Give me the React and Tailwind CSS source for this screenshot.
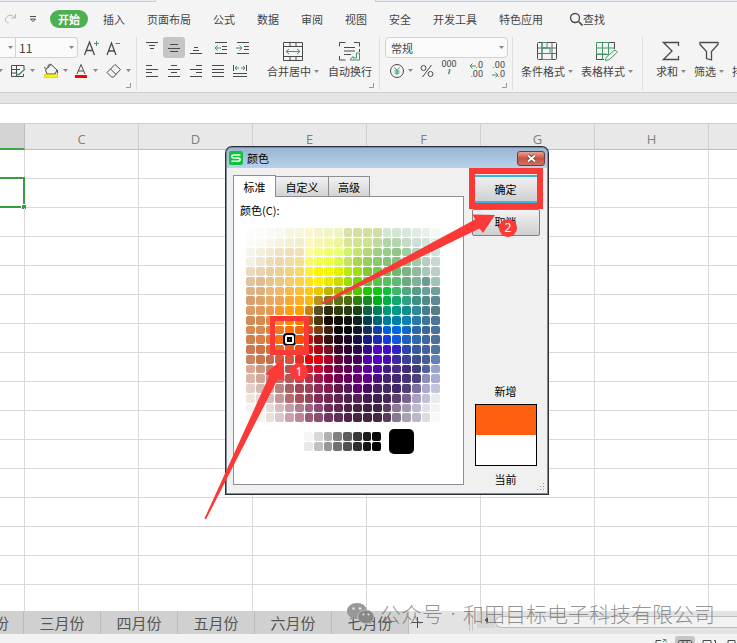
import { useState } from 'react';

const menuTabs = ['插入', '页面布局', '公式', '数据', '审阅', '视图', '安全', '开发工具', '特色应用'];

const columns = ['C', 'D', 'E', 'F', 'G', 'H', 'I'];
const rows = Array.from({ length: 16 }, (_, i) => i);

const sheets = ['三月份', '四月份', '五月份', '六月份', '七月份'];

// 20 x 20 standard colors, one string per row
const palette = [
  'fcfdfd fafcfb f8faf6 f8f9f2 f6f5dd f6f6d8 fbf6d0 f5f4d0 f2f3c6 f0f3c4 d8e2a8 d4dfa2 d3dfa0 cfdea2 d5e6d0 d3e4d3 d8e7d9 e0ebe3 e8f1ec f3f8f5',
  'fbfcfa fafbf6 f7f6ec f5f3e0 f3efd6 f2edcf fcf6c0 f5f5b8 f2f6a8 edf59c d8e694 d3e394 cfe090 c0d99c b0d3a8 b4d4b0 c4dcc6 cfe0d6 d4e5dc e0ede6',
  'f5f4ea f3f0e0 f3ead0 f0e4c0 f0e0b8 f0e2b4 fbfb98 f5ff80 f0ff70 e8ff78 d0f468 c6e56c b4d878 a0d080 98cc88 90c68c a4cca4 b8d4c0 c0d8cc d0e2da',
  'f2f1e4 eee6d2 ecdcb8 eed6a8 f0dca4 f2e08a f8fa68 f0ff58 ecff40 dcf850 c4e460 a8d848 98d058 88cc68 84c478 88c080 8cc090 a4c8a8 b4cfc0 c4dacf',
  'ead9bc e8d2b0 e8cfa0 ecd090 f2d478 f6dc60 fff040 fff400 f4f800 e0f400 b8ec10 a0e010 80cc30 78c850 70bf60 70b870 7cb484 90baa0 a8c8bc b8d0c8',
  'e0c4a0 dfbd94 e6c48c ecc87c f4cc64 fad448 ffe020 fff000 e8e800 ccdc00 98e000 70d800 60c838 58c450 58c060 60b878 68ac80 80b098 6c9c94 a0c4bc',
  'dcb288 deb080 e8b878 f0b866 f4b850 f8c038 ffc818 e8c800 c0b400 b0b800 80b400 58c400 20c808 10c810 10c040 40b868 50a880 589c88 68a09c 70a09c',
  'd8a070 dca468 e8a860 f0a450 f8a830 ffac20 f8b810 b89020 807020 607018 506c10 2c8010 188c20 00b018 00b040 10a870 30a080 409088 508c8c 608890',
  'dc9c68 e09a60 e89850 f89830 ffa010 ffa000 c88010 584c28 2c2c10 303c10 283c10 1c4018 106048 008058 009870 009880 108c8c 308898 487c8c 587c88',
  'd08c58 d88a50 e88840 f88820 ff8800 f07c00 a05c10 50340c 180c08 101008 101410 10201c 083c48 006478 007c98 0080a8 1080b0 2878a8 40749c 507498',
  'd88a56 d88a50 e08040 f07820 ff7000 f86400 c04810 7c3c14 402010 100808 080810 101828 143058 1040a8 0060d8 0068e0 1068c0 2868a8 386898 487098',
  'd08050 d88048 e07838 f87018 ff6000 f85008 c01010 781410 381010 200818 200828 181040 181c80 2028b8 1838e0 1058e0 2060c0 3068b0 3c68a0 4c7098',
  'cc7850 d07448 d86c40 e86828 f05818 f04810 d81010 a80818 781020 400828 300030 280c48 300c88 5008c8 4010c8 3020c8 2848b0 3858a0 4460a0 5074a0',
  'cc8460 c87850 c46c50 cc6040 d85038 e03020 e80008 dc0010 a80028 680038 500048 480060 5000a8 5400c0 480cb0 3c28a0 3c4098 3c4c90 445c98 6880b8',
  'dca898 d09880 c87c68 c06858 c05048 c83838 d81828 c80830 900038 700048 600058 600078 5c0098 5008a0 401c88 482c80 402c78 403c78 5060a0 98a4c8',
  'dcb8a8 d4a898 c88c80 bc7068 b45858 b44850 b83048 a01848 900048 700050 680060 680070 640088 481078 482470 442870 443478 4c4080 8c8cb8 a8acd0',
  'e4d0c8 d8bcb4 cca8a0 b88480 a86060 a04858 984058 8c2c54 801c50 601848 581858 600070 480c60 482060 442860 402868 504078 7c70a0 acaacc c0c4dc',
  'eee4e0 e8d8d4 d8bcbc c49898 b46c6c a85058 944458 802c58 702850 602450 502050 582058 441c50 402050 442858 5c4070 786090 a8a0c0 c4c0d4 e8ecee',
  'f4f5f3 f2f0ee e4dcd8 d8bcc0 c49ca4 b08090 a06080 8c4870 702c58 602850 4c2048 482040 402040 442444 5c4060 8c7898 a498b0 c0b8cc e0e0e8 f2f3f5',
  'fafaf9 f3f5f2 e8e0dc dcc8cc cca0ac bc8494 9c5878 885070 703860 603058 502448 4c2448 442440 482848 583c58 887890 a8a0b4 bcb8c8 dcdce0 f8f9f8',
].flatMap((row) => row.split(' '));

const grays = (
  'f5f5f5 d8d8d8 b0b0b0 808080 5c5c5c 383838 1c1c1c 080808 ' +
  'e8e8e8 c0c0c0 989898 707070 505050 303030 141414 000000'
).split(' ');

// row 11, column 4
const SELECTED = 11 * 20 + 4;

function Icon({ size = 16, width, className = '', children }) {
  return (
    <svg
      width={width || size}
      height={size}
      viewBox={`0 0 ${width || size} ${size}`}
      fill="none"
      stroke="#4a4a4a"
      className={`shrink-0 ${className}`}
      aria-hidden="true"
    >
      {children}
    </svg>
  );
}

function Caret({ className = '' }) {
  return (
    <svg width="5" height="3" viewBox="0 0 5 3" className={`shrink-0 ${className}`} aria-hidden="true">
      <path d="M0 0h5L2.5 3z" fill="#888" />
    </svg>
  );
}

function IconButton({ label, active, className = 'w-[22px]', children }) {
  return (
    <button
      type="button"
      aria-label={label}
      className={`flex h-[21px] shrink-0 items-center justify-center gap-1 rounded-[3px] ${active ? 'bg-[#c5c5c5]' : ''} ${className}`}
    >
      {children}
    </button>
  );
}

function BigButton({ label, caret, children }) {
  return (
    <button type="button" className="flex shrink-0 flex-col items-center pt-1 leading-4">
      {children}
      <span className="mt-[2px] flex items-center gap-[3px] whitespace-nowrap">
        {label}
        {caret ? <Caret /> : null}
      </span>
    </button>
  );
}

function Corner() {
  return (
    <svg width="5" height="5" viewBox="0 0 5 5" className="absolute right-[5px] bottom-[2px]" aria-hidden="true">
      <path d="M4.5 0v4.5H0" fill="none" stroke="#999" />
    </svg>
  );
}

function Lines({ d, arrow }) {
  return (
    <Icon size={14}>
      <path d={d} />
      {arrow ? <path d={arrow} stroke="#43966a" /> : null}
    </Icon>
  );
}

function MenuBar() {
  return (
    <nav className="flex h-8 items-center overflow-hidden pt-[2px] whitespace-nowrap">
      <button type="button" aria-label="恢复" className="ml-1 shrink-0">
        <Icon size={12} width={13}>
          <path d="M11.5 1v4H7.5M11 5C9 2 5.5 1.5 3 3.5S1 9 4.5 10" stroke="#b5b5b5" />
        </Icon>
      </button>
      <button type="button" aria-label="自定义快速访问工具栏" className="ml-3 shrink-0">
        <Icon size={8}>
          <path d="M1 1.500h6M1.500 4h5L4 6.500z" />
        </Icon>
      </button>
      <button type="button" className="ml-[13px] h-[18px] shrink-0 rounded-full bg-[#4caf50] px-2 leading-[18px] font-bold text-white">
        开始
      </button>
      <div className="ml-[15px] flex shrink-0 gap-[22px]">
        {menuTabs.map((tab) => (
          <button key={tab} type="button">{tab}</button>
        ))}
      </div>
      <button type="button" className="ml-[26px] flex shrink-0 items-center">
        <Icon size={14}>
          <circle cx="6" cy="6" r="4.5" strokeWidth="1.3" />
          <path d="M9.5 9.500l4 4" strokeWidth="1.6" />
        </Icon>
        查找
      </button>
    </nav>
  );
}

function FontGroup() {
  return (
    <div className="relative w-[137px] shrink-0 border-r border-[#dedede]">
      <div className="flex h-[21px] items-center">
        <div className="relative h-[21px] w-4 border-y border-r border-[#d2d2d2] bg-[#fafafa]">
          <Caret className="absolute top-2 left-2" />
        </div>
        <div className="relative">
          <select aria-label="字号" className="h-[21px] w-[62px] appearance-none rounded-r-[4px] border-y border-r border-[#d2d2d2] bg-[#fafafa] pl-[3px] text-xs leading-4">
            <option>11</option>
          </select>
          <Caret className="pointer-events-none absolute top-[9px] right-1" />
        </div>
        <IconButton label="增大字号" className="ml-[2px] w-[22px]">
          <Icon size={16}>
            <path d="M1.500 15L6.500 2l5 13M3.200 10.500h6.600" strokeWidth="1.3" />
            <path d="M11 3.500h5M13.500 1v5" stroke="#43966a" />
          </Icon>
        </IconButton>
        <IconButton label="减小字号">
          <Icon size={16}>
            <path d="M2 15L6.500 3l4.500 12M3.700 11h5.600" strokeWidth="1.3" />
            <path d="M10.500 3.500H15" stroke="#43966a" />
          </Icon>
        </IconButton>
      </div>
      <div className="mt-[2px] flex h-[21px] items-center">
        <Caret className="-ml-[2px]" />
        <IconButton label="边框" className="ml-[6px] w-[26px]">
          <Icon size={14} width={16}>
            <path d="M14 5V1.500H1.500v11H13.500V10M1.500 5.500H10M1.500 9H6M6.500 1.500v11" />
            <path d="M15 5L9 10.500H6" stroke="#43966a" strokeWidth="1.5" />
          </Icon>
          <Caret />
        </IconButton>
        <IconButton label="填充颜色" className="ml-[7px] w-[26px]">
          <Icon size={16}>
            <path d="M8 1.500L2.500 7 4 11h8l2-4zM3.500 5.500L1 4.500M5 5V2.500L8 1M14.500 7v3.500" />
            <path d="M1.500 11.500h13v3h-13z" fill="#fff200" stroke="#bdb400" strokeWidth=".5" />
          </Icon>
          <Caret />
        </IconButton>
        <IconButton label="字体颜色" className="ml-1 w-[26px]">
          <Icon size={16}>
            <path d="M4 11L8 1.500 12 11M5.500 8h5" />
            <path d="M2 12h12v3H2z" fill="#f00" stroke="none" />
          </Icon>
          <Caret />
        </IconButton>
        <IconButton label="清除" className="ml-[7px] w-[26px]">
          <Icon size={16}>
            <path d="M9 1.500l5.500 5-7 7.500h-2L1 9.500zM4.500 6l5.500 5.500" />
          </Icon>
          <Caret />
        </IconButton>
      </div>
      <Corner />
    </div>
  );
}

function AlignGroup() {
  return (
    <div className="relative flex w-[243px] shrink-0 border-r border-[#dedede] pl-1">
      <div className="w-[116px]">
        <div className="flex">
          <IconButton label="顶端对齐"><Lines d="M1 1.500h12M4 4.500h6M5 7.500h4" /></IconButton>
          <IconButton label="垂直居中" active><Lines d="M3 3.500h8M1 7.500h12M3 10.500h8" /></IconButton>
          <IconButton label="底端对齐"><Lines d="M5 6.500h4M4 9.500h6M1 12.500h12" /></IconButton>
          <IconButton label="减少缩进量" className="ml-[3px] w-[22px]">
            <Lines d="M1 1.500h12M8 5.500h5M8 8.500h5M1 12.500h12" arrow="M1 7h6M3.5 4.500L1 7l2.500 2.500" />
          </IconButton>
          <IconButton label="增加缩进量">
            <Lines d="M1 1.500h12M8 5.500h5M8 8.500h5M1 12.500h12" arrow="M0 7h6M3.500 4.500L6 7 3.500 9.500" />
          </IconButton>
        </div>
        <div className="mt-[2px] flex">
          <IconButton label="左对齐"><Lines d="M1 1.500h6M1 5.500h12M1 8.500h6M1 12.500h12" /></IconButton>
          <IconButton label="水平居中"><Lines d="M4 1.500h6M1 5.500h12M4 8.500h6M1 12.500h12" /></IconButton>
          <IconButton label="右对齐"><Lines d="M7 1.500h6M1 5.500h12M7 8.500h6M1 12.500h12" /></IconButton>
          <IconButton label="两端对齐"><Lines d="M1 1.500h12M1 5.500h12M1 8.500h12M1 12.500h12" /></IconButton>
          <IconButton label="分散对齐">
            <Lines d="M.5 1v6M13.500 1v6M0 9.500h14M0 12.500h14" arrow="M2 4h4M4 2L2 4l2 2M8 4h4M10 2l2 2-2 2" />
          </IconButton>
        </div>
      </div>
      <div className="ml-[10px] flex gap-[9px]">
        <BigButton label="合并居中" caret>
          <Icon size={20}>
            <path d="M.5 1.500h19v18H.5zM.5 5.500h19M.5 15.500h19M7 1.500v4M13 1.500v4M7 15.500v4M13 15.500v4" />
            <path d="M3 10.500h14M6 8l-3 2.500L6 13M14 8l3 2.500-3 2.500" stroke="#43966a" />
          </Icon>
        </BigButton>
        <BigButton label="自动换行">
          <Icon size={20} width={22}>
            <path d="M.5 5.500v-4h6M15 1.500h5.500v4M.5 15v4h6M20.500 8v3M5 6.500h11M5 10h11M5 13.500h7" />
            <path d="M20.500 12v7H11l3-3.500V17h3.500v-5z" stroke="#43966a" />
          </Icon>
        </BigButton>
      </div>
      <Corner />
    </div>
  );
}

function NumberGroup() {
  return (
    <div className="relative w-[133px] shrink-0 border-r border-[#dedede] pl-[5px]">
      <div className="relative w-[123px]">
        <select aria-label="数字格式" className="h-[21px] w-full appearance-none rounded-[4px] border border-[#d2d2d2] bg-[#fafafa] pl-[5px] leading-4">
          <option>常规</option>
        </select>
        <Caret className="pointer-events-none absolute top-[9px] right-1" />
      </div>
      <div className="mt-[2px] flex pl-1 font-['Roboto',sans-serif] text-[9px] leading-[9px]">
        <IconButton label="货币" className="w-6">
          <Icon size={14}>
            <circle cx="7" cy="7" r="6.5" />
            <path d="M4.500 3.500L7 6.500l2.500-3M7 6.500V11M4.500 7h5M4.500 9h5" stroke="#43966a" />
          </Icon>
          <Caret />
        </IconButton>
        <IconButton label="百分比" className="ml-1 w-5">
          <Icon size={14}>
            <circle cx="3.500" cy="4" r="2.500" />
            <circle cx="10.500" cy="10" r="2.500" />
            <path d="M11.500 1l-9 12" />
          </Icon>
        </IconButton>
        <button type="button" aria-label="千位分隔" className="ml-[2px] flex h-[21px] w-5 flex-col items-center">
          000
          <Icon size={6}><path d="M3.500 0v2.500L2.500 5" stroke="#43966a" strokeWidth="1.5" /></Icon>
        </button>
        <button type="button" aria-label="增加小数位" className="ml-1 flex h-[21px] w-5 flex-col items-end pt-px">
          <span className="flex items-center"><Icon size={6}><path d="M0 3h6M2.500 .5L0 3l2.500 2.500" stroke="#43966a" /></Icon>.0</span>
          <span>.00</span>
        </button>
        <button type="button" aria-label="减少小数位" className="ml-[2px] flex h-[21px] w-5 flex-col items-end pt-px">
          <span>.00</span>
          <span className="flex items-center"><Icon size={6}><path d="M0 3h6M3.500 .5L6 3 3.500 5.500" stroke="#43966a" /></Icon>.0</span>
        </button>
      </div>
      <Corner />
    </div>
  );
}

function Ribbon() {
  return (
    <div className="flex h-[55px] overflow-hidden pt-[2px]">
      <FontGroup />
      <AlignGroup />
      <NumberGroup />
      <div className="flex w-[130px] shrink-0 gap-2 border-r border-[#dedede] pl-2">
        <BigButton label="条件格式" caret>
          <Icon size={20}>
            <rect x=".5" y="1.5" width="19" height="17" rx="1" />
            <path d="M.5 7h19M.5 12.500h19M5 1.500v17M15 1.500v17" strokeWidth=".8" />
            <path d="M5 1.500h5V7H5zM5 7h8v5.500H5zM5 12.500h10v6H5z" stroke="#43966a" />
          </Icon>
        </BigButton>
        <BigButton label="表格样式" caret>
          <Icon size={20} width={22}>
            <path d="M13 1.500h5.500V8M.5 13v5.500H8" />
            <path d="M.5 1.500h12v12H.5zM.5 7h18M6.500 1.500v17M12.500 1.500V11M.5 13h10" stroke="#43966a" />
            <path d="M20 9.500l1.500 1.500-8 7.500-4 1 .5-3 8-7z" stroke="#43966a" fill="#f4f4f4" />
          </Icon>
        </BigButton>
      </div>
      <div className="flex min-w-0 flex-1 gap-2 overflow-hidden pl-[13px]">
        <BigButton label="求和" caret>
          <Icon size={20} width={18}>
            <path d="M16.500 5V1.500H1.500L10 10l-8.500 8.500h15V15" strokeWidth="1.3" />
          </Icon>
        </BigButton>
        <BigButton label="筛选" caret>
          <Icon size={20}>
            <path d="M1 1.500h18v2l-6.500 7v8.500l-5-1.500v-7L1 3.500z" strokeWidth="1.3" />
          </Icon>
        </BigButton>
        <BigButton label="排序" caret>
          <Icon size={20} />
        </BigButton>
      </div>
    </div>
  );
}

function Sheet() {
  return (
    <div className="min-h-0 flex-1 overflow-hidden bg-white">
      <table className="w-[823px] table-fixed border-separate border-spacing-0">
        <thead>
          <tr className="h-[26px] bg-[#e8e8e8] font-['Open_Sans',sans-serif] text-[13px] text-[#808080]">
            <th className="w-[25px] border-r border-b-2 border-r-[#bdbdbd] border-b-[#43a047] bg-[#d4d4d4] p-0" aria-label="B" />
            {columns.map((name) => (
              <th key={name} className="w-[114px] border-r border-b border-r-[#cfcfcf] border-b-[#bdbdbd] p-0 pt-[5px] leading-5 font-normal">
                {name}
              </th>
            ))}
          </tr>
        </thead>
        <tbody>
          {rows.map((row) => (
            <tr key={row} className="h-[29px]">
              <td className="relative border-r border-b border-[#d9d9d9] p-0">
                {row === 1 ? (
                  <span className="absolute -top-[2px] -right-[1px] -bottom-[1px] left-0 border-y-2 border-r-2 border-[#3a9b3c]">
                    <span className="absolute -right-[3px] -bottom-[3px] h-[5px] w-[5px] border-t border-l border-white bg-[#3a9b3c]" />
                  </span>
                ) : null}
              </td>
              {columns.map((name) => (
                <td key={name} className="border-r border-b border-[#d9d9d9] p-0" />
              ))}
            </tr>
          ))}
        </tbody>
      </table>
    </div>
  );
}

function SheetTabs() {
  return (
    <div className="flex h-[23px] shrink-0 items-stretch overflow-hidden bg-[#e3e3e3] text-[15px] leading-[23px] text-[#555]">
      <button type="button" className="flex w-6 shrink-0 justify-end border-r border-[#bbb] bg-[#d0d0d0] pr-[14px] whitespace-nowrap">
        二月份
      </button>
      {sheets.map((name) => (
        <button key={name} type="button" className="w-[77px] shrink-0 border-r border-[#bdbdbd] bg-[#d0d0d0]">
          {name}
        </button>
      ))}
      <button type="button" aria-label="新建工作表" className="w-6">
        <Icon size={13} className="mx-[2px]"><path d="M6.5 1v11M1 6.500h11" /></Icon>
      </button>
      <div className="ml-9 h-4 w-1 self-center border-x border-[#c4c4c4]" />
      <div className="ml-1 flex h-[17px] w-[18px] items-center justify-center bg-[#d6d6d6]">
        <Icon size={6}><path d="M4.5 1L2 3l2.500 2z" fill="#555" /></Icon>
      </div>
      <div className="mt-[5px] h-3 flex-1 rounded-l-full border-y border-l border-[#bbb] bg-[#f2f2f2]" />
    </div>
  );
}

function StatusBar() {
  return (
    <div className="flex h-[9px] shrink-0 items-start justify-end gap-[7px] overflow-hidden bg-[#f3f3f3] pt-[2px]">
      <Icon size={14}><path d="M2 10V4.500h5M12 7v3" /><path d="M9 6l3-3M9 3.500h3V6" stroke="#43966a" /></Icon>
      <span className="flex h-4 w-5 justify-center rounded-[3px] bg-[#c5c5c5]">
        <Icon size={14}><rect x=".5" y="4.5" width="13" height="8" rx="1" /><path d="M5 4.500v8M9 4.500v8" /></Icon>
      </span>
      <Icon size={14}><path d="M1 10V4.500h8V10M12 4.500h1.500V10" /></Icon>
      <Icon size={14}><path d="M5 10V4.500h7V10" /></Icon>
    </div>
  );
}

function Swatch({ color, selected, onClick }) {
  return (
    <button
      type="button"
      aria-label={`#${color}`}
      onClick={onClick}
      className="relative rounded-[2px]"
      style={{ backgroundColor: `#${color}` }}
    >
      {selected ? (
        <span className="absolute -inset-[2px] rounded-[4px] border-2 border-black bg-white p-[2px]">
          <span className="block h-full w-full border-2 border-black bg-[#ff6010]" />
        </span>
      ) : null}
    </button>
  );
}

function ColorDialog() {
  const [selected, setSelected] = useState(SELECTED);
  const tab = 'border border-b-0 border-[#8d8d92] leading-[18px]';

  return (
    <section
      role="dialog"
      aria-label="颜色"
      className="absolute top-[147px] left-[226px] flex h-[347px] w-[322px] flex-col overflow-hidden rounded-t-[6px] border border-[#7d8893] border-r-[#39a5c4] border-b-[#39a5c4] bg-[#f0f0f0] text-black ring-1 ring-[#2b3138]"
    >
      <header className="flex h-5 shrink-0 items-center bg-linear-to-b from-[#9ab5d3] to-[#b9d1ea] pl-[2px]">
        <svg width="14" height="14" viewBox="0 0 14 14" aria-hidden="true">
          <rect width="14" height="14" rx="2.5" fill="#0cc53c" />
          <path d="M11.500 4H5.200C2 4 2 7 5.200 7h3.600c3.200 0 3.200 3.200 0 3.200H2.500" fill="none" stroke="#fff" strokeWidth="1.5" />
        </svg>
        <h2 className="ml-1 flex-1 leading-5">颜色</h2>
        <button type="button" aria-label="关闭" className="mr-[2px] flex h-[15px] w-7 items-center justify-center rounded-[3px] border border-[#74393a] bg-linear-to-b from-[#e3a296] via-[#c9503f] to-[#cf7160]">
          <svg width="11" height="9" viewBox="0 0 11 9" aria-hidden="true">
            <path d="M2 1.500l7 6M9 1.500l-7 6" stroke="#5a3a42" strokeWidth="3.5" />
            <path d="M2 1.500l7 6M9 1.500l-7 6" stroke="#fff" strokeWidth="2" />
          </svg>
        </button>
      </header>

      <div className="flex min-h-0 flex-1 pt-[7px] pl-[6px]">
        <div className="mb-2 flex w-[231px] flex-col">
          <div className="flex h-[21px] shrink-0 items-end">
            <button type="button" className={`${tab} relative z-10 -mb-px h-[22px] w-[43px] bg-white`}>标准</button>
            <button type="button" className={`${tab} h-5 w-[53px] border-l-0 bg-linear-to-b from-[#f2f2f2] to-[#d3d3d3]`}>自定义</button>
            <button type="button" className={`${tab} h-5 w-[41px] border-l-0 bg-linear-to-b from-[#f2f2f2] to-[#d3d3d3]`}>高级</button>
          </div>
          <div className="flex-1 border border-[#8d8d92] bg-white pt-[5px]">
            <p className="ml-[6px] leading-4">颜色(C):</p>
            <div className="mt-[10px] ml-3 grid h-[194px] w-[194px] grid-cols-20 grid-rows-20 gap-px">
              {palette.map((color, i) => (
                <Swatch key={i} color={color} selected={i === selected} onClick={() => setSelected(i)} />
              ))}
            </div>
            <div className="mt-[7px] ml-[70px] flex items-center gap-2">
              <div className="grid h-[19px] w-[77px] grid-cols-8 grid-rows-2 gap-px">
                {grays.map((color, i) => (
                  <Swatch key={i} color={color} />
                ))}
              </div>
              <button type="button" aria-label="黑色" className="h-[25px] w-[25px] rounded-[5px] bg-black" />
            </div>
          </div>
        </div>

        <div className="mb-[6px] flex flex-1 flex-col items-center">
          <button type="button" className="h-7 w-[66px] border-y-2 border-[#3bb5dd] bg-linear-to-b from-[#f0f0f0] to-[#cfd0d1]">确定</button>
          <button type="button" className="mt-[6px] h-[27px] w-[68px] rounded-[2px] border border-[#808080] bg-linear-to-b from-[#f3f3f3] to-[#cfcfcf]">取消</button>
          <p className="mt-auto leading-4">新增</p>
          <div className="mt-[5px] h-[62px] w-[62px] border border-black bg-white">
            <div className="h-[30px] bg-[#ff600f]" />
          </div>
          <p className="mt-[5px] leading-4">当前</p>
        </div>
      </div>
      <svg width="8" height="8" viewBox="0 0 8 8" className="absolute right-[2px] bottom-[2px]" aria-hidden="true">
        <path d="M6 0h1v1H6zM3 3h1v1H3zM6 3h1v1H6zM0 6h1v1H0zM3 6h1v1H3zM6 6h1v1H6z" fill="#999" />
      </svg>
    </section>
  );
}

function Annotations() {
  const badge = 'absolute flex h-[18px] w-[18px] items-center justify-center rounded-full bg-[#fb3a38] font-["Noto_Sans",sans-serif] text-xs leading-none text-white';
  return (
    <div className="pointer-events-none absolute inset-0">
      <div className="absolute top-[316px] left-[270px] h-[39px] w-[39px] border-[5px] border-[#fb3a38]" />
      <div className="absolute top-[168px] left-[469px] h-[41px] w-[74px] border-[6px] border-[#fb3a38]" />
      <svg width="737" height="643" viewBox="0 0 737 643" className="absolute top-0 left-0" aria-hidden="true">
        <path d="M204.500 518.500L269.500 375.500 265 374 283.500 358 284.500 381 278 378.500 206 519.500z" fill="#fb3a38" />
        <path d="M321.500 302.500L475 219.500 472.500 214.500 495 215 483 233 479.500 228.500 322.500 304.500z" fill="#fb3a38" />
      </svg>
      <span className={`${badge} top-[363px] left-[290px]`}>1</span>
      <span className={`${badge} top-[219px] left-[499px]`}>2</span>
    </div>
  );
}

function Watermark() {
  return (
    <div className="pointer-events-none absolute top-[599px] left-[347px] flex items-center text-[21px] leading-7 font-light whitespace-nowrap text-[#666]/70">
      <svg width="28" height="24" viewBox="0 0 28 24" aria-hidden="true">
        <path d="M10 2C4.500 2 0 5.500 0 10c0 2.500 1.500 4.700 3.500 6.200L2.500 19l3.500-1.700c1.200.4 2.600.6 4 .6C15.500 17.900 20 14.500 20 10S15.500 2 10 2z" fill="#999" />
        <path d="M19 9c-4.700 0-8.200 3-8.200 6.800s3.500 6.800 8.200 6.800c1 0 2-.2 2.900-.4l2.900 1.300-.8-2.400c1.900-1.300 3-3.200 3-5.300C27 12 23.700 9 19 9z" fill="#888" stroke="#d0d0d0" strokeWidth=".7" />
        <g fill="#e5e5e5">
          <circle cx="6.500" cy="7.500" r="1.300" />
          <circle cx="13" cy="7.500" r="1.300" />
          <circle cx="16.500" cy="13.500" r="1" />
          <circle cx="21.500" cy="13.500" r="1" />
        </g>
      </svg>
      <span className="ml-[5px]">公众号</span>
      <span className="w-5 text-center font-['Noto_Sans',sans-serif]">·</span>
      <span>和田目标电子科技有限公司</span>
    </div>
  );
}

export default function App() {
  return (
    <div className="relative flex h-screen flex-col overflow-hidden bg-[#f4f4f4] font-['Noto_Sans_CJK_SC',sans-serif] text-[11px] text-[#444]">
      <div className="flex h-[2px] shrink-0">
        <div className="w-[156px] border-r border-b border-[#c3cddb] bg-[#e6ecf4]" />
        <div className="w-[219px]" />
        <div className="flex-1 border-b border-l border-[#c3cddb] bg-[#e6ecf4]" />
      </div>
      <div className="shrink-0 border-b border-[#cfcfcf] pb-[2px]">
        <MenuBar />
        <div className="pt-[1px]">
          <Ribbon />
        </div>
      </div>
      <div className="h-[10px] shrink-0 bg-[#e4e4e4]" />
      <div className="h-[21px] shrink-0 border-y border-[#cfcfcf] bg-white" />
      <Sheet />
      <SheetTabs />
      <StatusBar />
      <ColorDialog />
      <Annotations />
      <Watermark />
    </div>
  );
}
